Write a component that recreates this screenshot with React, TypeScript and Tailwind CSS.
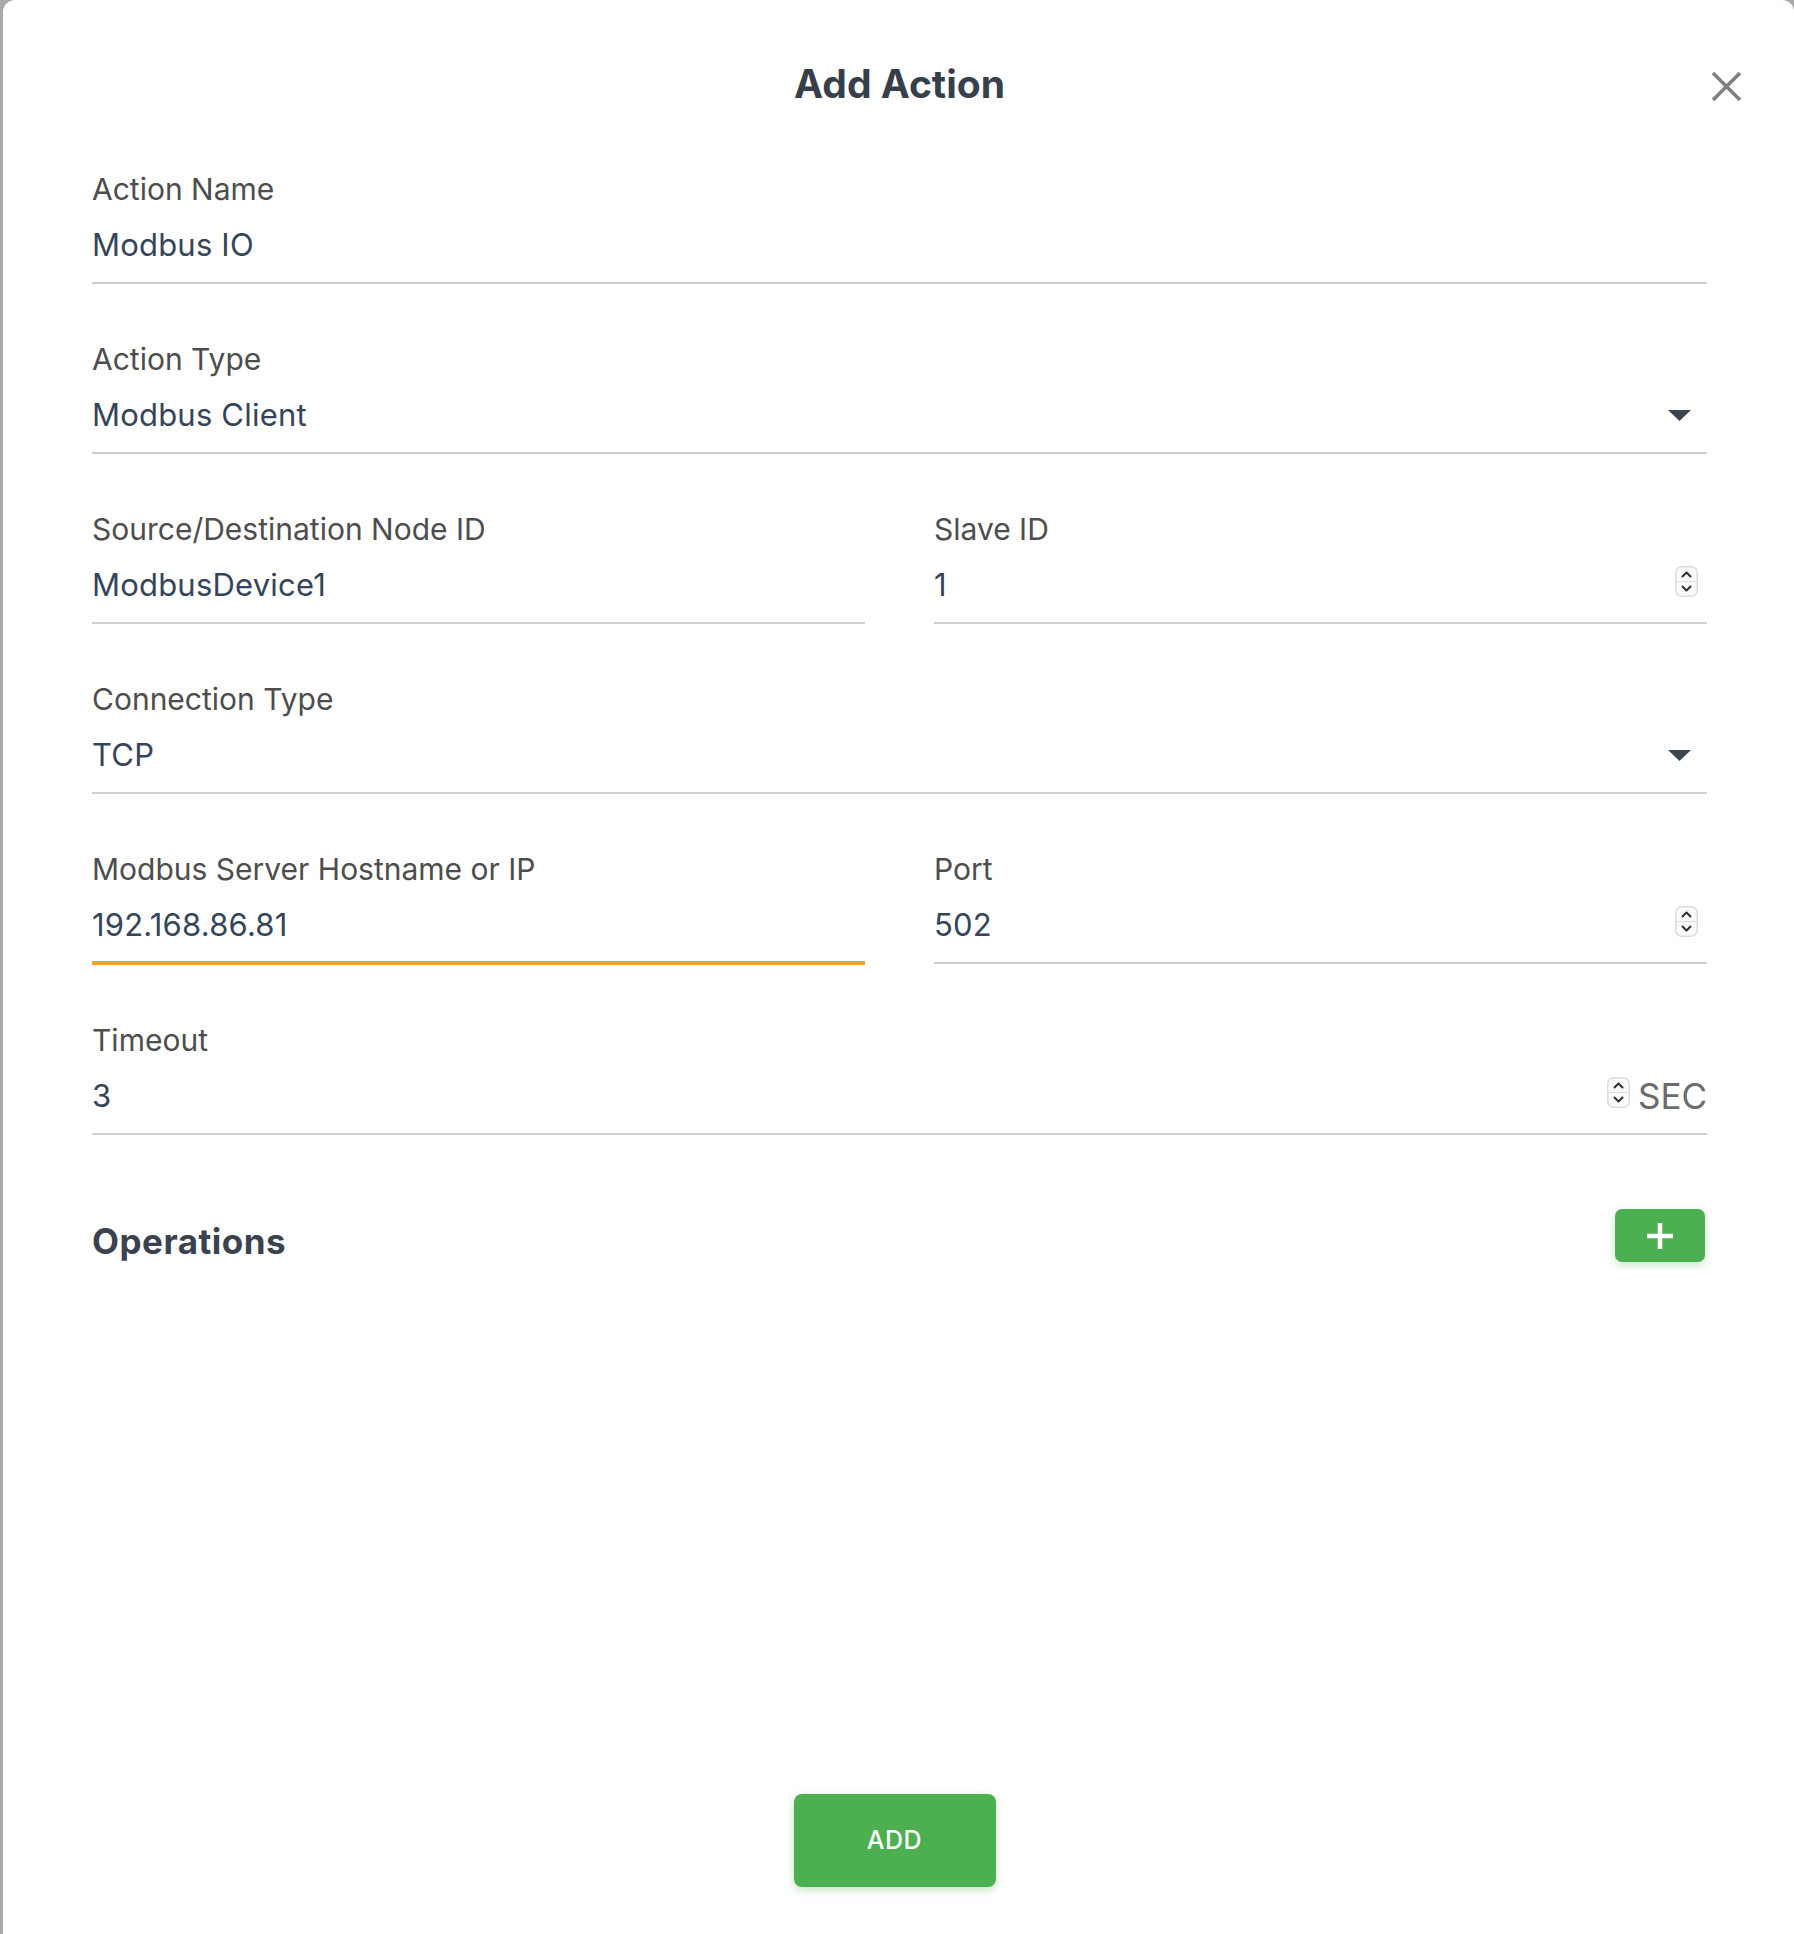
import React from "react";

function Spinner() {
  return (
    <svg width="23" height="31" viewBox="0 0 23 31" className="shrink-0">
      <rect x="0.75" y="0.75" width="21.5" height="29.5" rx="6" fill="#fbfbfb" stroke="#dcdcdc" strokeWidth="1.5" />
      <line x1="1" y1="15.5" x2="22" y2="15.5" stroke="#dedede" strokeWidth="1" />
      <path d="M7.5 10.5 L11.5 6.5 L15.5 10.5" fill="none" stroke="#2f2f2f" strokeWidth="2" strokeLinecap="round" strokeLinejoin="round" />
      <path d="M7.5 20.5 L11.5 24.5 L15.5 20.5" fill="none" stroke="#2f2f2f" strokeWidth="2" strokeLinecap="round" strokeLinejoin="round" />
    </svg>
  );
}

function Caret() {
  return (
    <svg width="23" height="11" viewBox="0 0 23 11" className="mr-[16px] shrink-0">
      <path d="M0 0 H23 L11.5 11 Z" fill="#3b4452" />
    </svg>
  );
}

type FieldProps = {
  label: string;
  value: string;
  focused?: boolean;
  trailing?: React.ReactNode;
};

function Field({ label, value, focused, trailing }: FieldProps) {
  return (
    <div className="flex flex-col">
      <div className="text-[30px] leading-[36px] text-[#4d4d4d]">{label}</div>
      <div
        className={
          focused
            ? "mt-[18px] flex items-start justify-between border-b-4 border-[#f2a51d] pb-[16px]"
            : "mt-[18px] flex items-start justify-between border-b-2 border-[#d0d0d0] pb-[17px]"
        }
      >
        <div className="text-[31px] leading-[40px] tracking-[0.2px] text-[#34455a]">{value}</div>
        {trailing}
      </div>
    </div>
  );
}

export default function App() {
  return (
    <div className="min-h-[1934px] w-full bg-[#a9a9a9] font-['Inter',sans-serif]">
      <div className="relative ml-[3px] min-h-[1934px] rounded-t-[12px] bg-white pl-[89px] pr-[87px] pt-[60px]">
        <button className="absolute right-[52px] top-[71px] text-[#7d7d7d]">
          <svg width="31" height="31" viewBox="0 0 31 31">
            <path d="M2 2 L29 29 M29 2 L2 29" stroke="#808080" strokeWidth="3.6" strokeLinecap="butt" />
          </svg>
        </button>

        <h1 className="text-center text-[39px] font-bold leading-[48px] text-[#373f4d]">Add Action</h1>

        <div className="mt-[63px] flex flex-col gap-[57px]">
          <Field label="Action Name" value="Modbus IO" />
          <Field
            label="Action Type"
            value="Modbus Client"
            trailing={
              <div className="flex h-[40px] items-center">
                <Caret />
              </div>
            }
          />
          <div className="grid grid-cols-2 gap-x-[69px]">
            <Field label="Source/Destination Node ID" value="ModbusDevice1" />
            <Field
              label="Slave ID"
              value="1"
              trailing={
                <div className="mr-[9px] pt-[1px]">
                  <Spinner />
                </div>
              }
            />
          </div>
          <Field
            label="Connection Type"
            value="TCP"
            trailing={
              <div className="flex h-[40px] items-center">
                <Caret />
              </div>
            }
          />
          <div className="grid grid-cols-2 gap-x-[69px]">
            <Field label="Modbus Server Hostname or IP" value="192.168.86.81" focused />
            <Field
              label="Port"
              value="502"
              trailing={
                <div className="mr-[9px] pt-[1px]">
                  <Spinner />
                </div>
              }
            />
          </div>
          <Field
            label="Timeout"
            value="3"
            trailing={
              <div className="flex items-start gap-[8px]">
                <div className="pt-[1px]">
                  <Spinner />
                </div>
                <span className="text-[35px] leading-[40px] text-[#6b6b6b]">SEC</span>
              </div>
            }
          />
        </div>

        <div className="mt-[74px] flex items-end justify-between pr-[2px]">
          <h2 className="text-[35px] font-bold leading-[42px] tracking-[0.5px] text-[#3a4250]">Operations</h2>
          <button className="flex h-[53px] w-[90px] items-center justify-center rounded-[7px] bg-[#4caf50] shadow-[0_3px_8px_rgba(76,175,80,0.3)]">
            <svg width="30" height="30" viewBox="0 0 30 30">
              <path d="M15 2 V28 M2 15 H28" stroke="#ffffff" strokeWidth="4.5" />
            </svg>
          </button>
        </div>

        <div className="mt-[532px] flex justify-center pr-[10px]">
          <button className="h-[93px] w-[202px] rounded-[8px] bg-[#4caf50] text-[25px] font-medium tracking-[0.5px] text-white shadow-[0_3px_8px_rgba(76,175,80,0.35)]">
            ADD
          </button>
        </div>
      </div>
    </div>
  );
}
